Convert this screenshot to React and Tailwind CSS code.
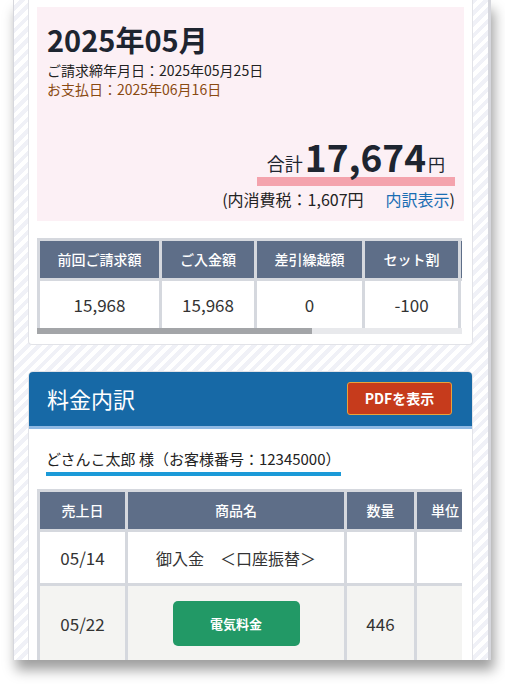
import React from 'react'

const font = "font-['Noto_Sans_CJK_JP','Noto_Sans',sans-serif]"

const summaryCols = [
  { label: '前回ご請求額', value: '15,968', w: 'w-[119px]' },
  { label: 'ご入金額', value: '15,968', w: 'w-[92px]' },
  { label: '差引繰越額', value: '0', w: 'w-[105px]' },
  { label: 'セット割', value: '-100', w: 'w-[93px]' },
  { label: '', value: '', w: 'w-[40px]' },
]

const detailCols = [
  { label: '売上日', w: 'w-[85px]' },
  { label: '商品名', w: 'w-[216px]' },
  { label: '数量', w: 'w-[67px]' },
  { label: '単位', w: 'w-[60px]' },
]

const SummaryTable = () => (
  <div className="mt-[17px] w-[425px] overflow-hidden bg-[#d5d8de]">
    <div className="flex w-max gap-[3px] p-[3px] pb-0">
      {summaryCols.map((c, i) => (
        <div key={i} className={`${c.w} shrink-0 flex flex-col gap-[3px]`}>
          <div className="h-[37px] bg-[#5e6e88] text-white text-[14px] font-medium flex items-center justify-center">
            {c.label}
          </div>
          <div className="h-[47px] bg-white text-[#333] text-[17px] flex items-center justify-center">
            {c.value}
          </div>
        </div>
      ))}
    </div>
    {/* scrollbar */}
    <div className="h-[6px] bg-[#e8e9ec]">
      <div className="h-full w-[275px] bg-[#a3a5a8]" />
    </div>
  </div>
)

const DetailTable = () => (
  <div className="mt-[13px] w-[425px] overflow-hidden bg-[#d5d8de] p-[3px] pr-0">
    <div className="flex w-max gap-[3px]">
      {detailCols.map((c) => (
        <div key={c.label} className={`${c.w} shrink-0 h-[37px] bg-[#5e6e88] text-white text-[14px] font-medium flex items-center ${c.label === '単位' ? 'justify-start pl-[14px]' : 'justify-center'}`}>
          {c.label}
        </div>
      ))}
    </div>
    <div className="mt-[3px] flex w-max gap-[3px]">
      <div className="w-[85px] h-[51px] bg-white text-[17px] text-[#333] flex items-center justify-center">05/14</div>
      <div className="w-[216px] h-[51px] bg-white text-[16px] text-[#333] flex items-center justify-center">御入金　＜口座振替＞</div>
      <div className="w-[67px] h-[51px] bg-white" />
      <div className="w-[60px] h-[51px] bg-white" />
    </div>
    <div className="mt-[3px] flex w-max gap-[3px]">
      <div className="w-[85px] h-[75px] bg-[#f4f4f2] text-[17px] text-[#333] flex items-center justify-center">05/22</div>
      <div className="w-[216px] h-[75px] bg-[#f4f4f2] flex items-center justify-center">
        <div className="w-[127px] h-[45px] rounded-[5px] bg-[#229966] text-white text-[13px] font-bold flex items-center justify-center">
          電気料金
        </div>
      </div>
      <div className="w-[67px] h-[75px] bg-[#f4f4f2] text-[17px] text-[#333] flex items-center justify-center">446</div>
      <div className="w-[60px] h-[75px] bg-[#f4f4f2]" />
    </div>
  </div>
)

export default function App() {
  return (
    <div className={`${font} w-[505px] h-[684px] bg-white`}>
      <div className="ml-[13px] w-[478px] h-[660px] overflow-hidden border-l border-r-[3px] border-[#d6d7dd] shadow-[3px_10px_12px_rgba(0,0,0,0.38)] bg-[repeating-linear-gradient(135deg,#ffffff_0px,#ffffff_4px,#f0f1f7_4px,#f0f1f7_8px)] pl-[14px] pr-[13px]">
        {/* billing card */}
        <div className="w-[445px] bg-white border-x border-b border-[#e2e3e8] rounded-b-[4px] px-[8px] pt-[7px] pb-[10px]">
          <div className="h-[214px] bg-[#fcf0f5] pl-[10px] pr-[9px] pt-[12px] flex flex-col">
            <div className="text-[29px] font-bold text-[#1e2530] leading-[40px]">2025年05月</div>
            <div className="mt-[2px] text-[14px] text-[#222] leading-[19px]">ご請求締年月日：2025年05月25日</div>
            <div className="text-[14px] text-[#8a4a12] leading-[19px]">お支払日：2025年06月16日</div>
            <div className="mt-auto flex flex-col items-end pb-[11px]">
              <div className="px-[10px] border-b-[9px] border-[#f4a3ad] flex items-end leading-none text-[#1e2530]">
                <span className="text-[18px] mb-[5px]">合計</span>
                <span className="text-[37px] font-bold mx-[2px] leading-[42px]">17,674</span>
                <span className="text-[17px] mb-[5px]">円</span>
              </div>
              <div className="mt-[2px] text-[16px] text-[#222] leading-[22px]">
                (内消費税：1,607円<span className="ml-[22px] text-[#1a6db3]">内訳表示</span>)
              </div>
            </div>
          </div>
          <SummaryTable />
        </div>

        {/* detail card */}
        <div className="mt-[26px] w-[445px] bg-white border border-[#e2e3e8] rounded-t-[5px] overflow-hidden">
          <div className="h-[58px] bg-[#1769a6] border-b-[3px] border-[#8fb9e3] pl-[19px] pr-[21px] flex items-center justify-between -mx-px -mt-px">
            <span className="text-[22px] text-white">料金内訳</span>
            <button className="w-[105px] h-[33px] rounded-[3px] bg-[#c63b1c] border border-[#e9a23a] text-white text-[14px] font-bold">
              PDFを表示
            </button>
          </div>
          <div className="px-[8px] pt-[17px]">
            <div className="inline-block ml-[9px] border-b-4 border-[#1b9ad8] text-[15px] text-[#222] leading-[24px] pb-[1px]">
              どさんこ太郎 様（お客様番号：12345000）
            </div>
            <DetailTable />
          </div>
        </div>
      </div>
    </div>
  )
}
